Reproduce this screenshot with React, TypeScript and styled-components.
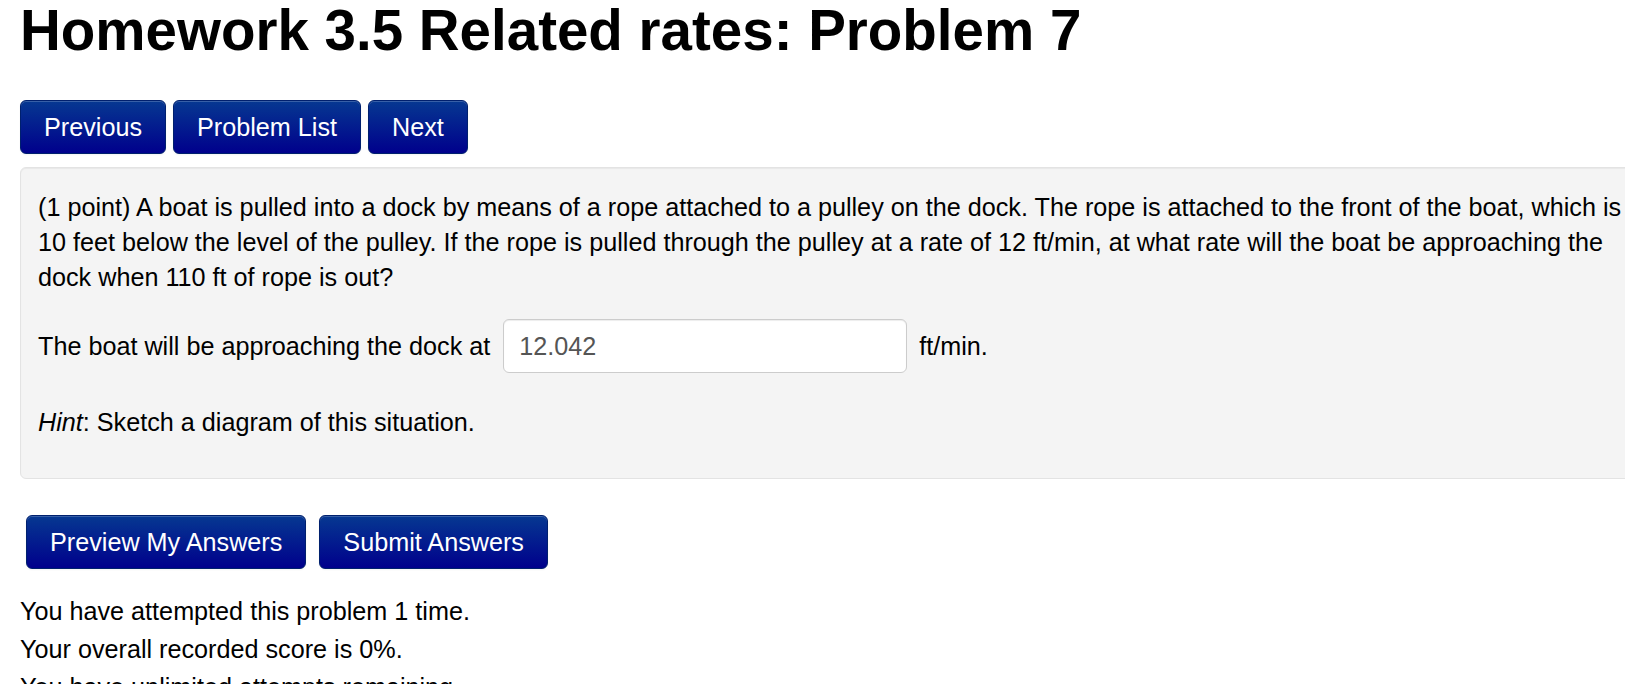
import React from 'react';
import styled, { createGlobalStyle } from 'styled-components';

const GlobalStyle = createGlobalStyle`
  html, body {
    margin: 0;
    padding: 0;
    overflow: hidden;
    background: #ffffff;
  }
  body {
    font-family: "Liberation Sans", Arial, sans-serif;
    font-size: 25.2px;
    line-height: 35px;
    color: #000000;
  }
`;

const Page = styled.div`
  padding: 0 0 0 20px;
  width: 1634px;
`;

const Title = styled.h1`
  font-size: 56.5px;
  line-height: 64px;
  font-weight: 700;
  margin: -1px 0 37px 0;
`;

const NavRow = styled.div`
  display: flex;
  gap: 7px;
  margin-bottom: 13px;
`;

const Button = styled.button`
  font-family: "Liberation Sans", Arial, sans-serif;
  font-size: 25.2px;
  line-height: 32px;
  color: #ffffff;
  padding: 10px 23px;
  border: 1px solid #00206e;
  border-radius: 6px;
  background: linear-gradient(to bottom, #063891, #00008c);
  box-shadow: inset 0 1px 0 rgba(255, 255, 255, 0.2), 0 1px 2px rgba(0, 0, 0, 0.05);
  cursor: pointer;
`;

const Well = styled.div`
  background: #f4f4f4;
  border: 1px solid #e3e3e3;
  border-radius: 6px;
  box-shadow: inset 0 1px 1px rgba(0, 0, 0, 0.05);
  padding: 22px 17px 20px 17px;
`;

const Paragraph = styled.p`
  margin: 0 0 24px 0;
`;

const HintParagraph = styled.p`
  margin: 0 0 18px 0;
`;

const AnswerRow = styled.div`
  display: flex;
  align-items: center;
  margin: 0 0 32px 0;
`;

const AnswerInput = styled.input`
  width: 404px;
  height: 54px;
  box-sizing: border-box;
  margin: 0 12px 0 13px;
  border: 1px solid #cccccc;
  border-radius: 6px;
  background: #ffffff;
  padding: 0 15px;
  font-family: "Liberation Sans", Arial, sans-serif;
  font-size: 25.2px;
  color: #555555;
  box-shadow: inset 0 1px 1px rgba(0, 0, 0, 0.075);
  outline: none;
`;

const SubmitRow = styled.div`
  display: flex;
  gap: 13px;
  padding-left: 6px;
  margin: 36px 0 23px 0;
`;

const Status = styled.div`
  line-height: 38px;
`;

export default function App() {
  return (
    <>
      <GlobalStyle />
      <Page>
        <Title>Homework 3.5 Related rates: Problem 7</Title>
        <NavRow>
          <Button>Previous</Button>
          <Button>Problem List</Button>
          <Button>Next</Button>
        </NavRow>
        <Well>
          <Paragraph>
            (1 point) A boat is pulled into a dock by means of a rope attached to a pulley on the dock. The rope is
            attached to the front of the boat, which is 10 feet below the level of the pulley. If the rope is pulled
            through the pulley at a rate of 12 ft/min, at what rate will the boat be approaching the dock when 110 ft
            of rope is out?
          </Paragraph>
          <AnswerRow>
            <span>The boat will be approaching the dock at</span>
            <AnswerInput defaultValue="12.042" />
            <span>ft/min.</span>
          </AnswerRow>
          <HintParagraph>
            <i>Hint</i>: Sketch a diagram of this situation.
          </HintParagraph>
        </Well>
        <SubmitRow>
          <Button>Preview My Answers</Button>
          <Button>Submit Answers</Button>
        </SubmitRow>
        <Status>
          <div>You have attempted this problem 1 time.</div>
          <div>Your overall recorded score is 0%.</div>
          <div>You have unlimited attempts remaining.</div>
        </Status>
      </Page>
    </>
  );
}
